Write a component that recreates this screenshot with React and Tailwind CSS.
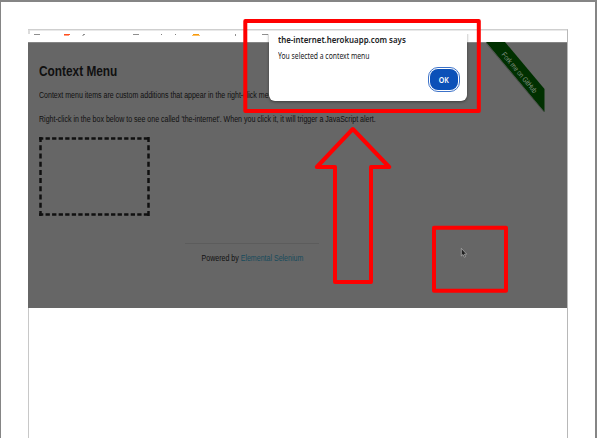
function TabStrip() {
  return (
    <svg className="block h-[12px] w-[539px] shrink-0" viewBox="28 30 539 12" shapeRendering="crispEdges">
      <rect x="28" y="30" width="539" height="1" fill="#e9e9e9" />
      <rect x="28" y="30" width="2" height="4" fill="#dcdcdc" />
      <rect x="34" y="34" width="6" height="1" fill="#8f8f8f" />
      <rect x="64" y="34" width="6" height="1" fill="#ff5020" />
      <rect x="64" y="35" width="5" height="1" fill="#ff9c80" />
      <rect x="83" y="34" width="2" height="1" fill="#909090" />
      <rect x="82" y="35" width="2" height="1" fill="#c0c0c0" />
      <rect x="133" y="34" width="6" height="1" fill="#8f8f8f" />
      <rect x="161" y="34" width="1" height="1" fill="#808080" />
      <rect x="175" y="34" width="1" height="1" fill="#808080" />
      <rect x="193" y="34" width="6" height="1" fill="#f59a10" />
      <rect x="192" y="35" width="8" height="1" fill="#ffc060" />
      <rect x="235" y="34" width="1" height="2" fill="#909090" />
      <rect x="262" y="34" width="6" height="1" fill="#8f8f8f" />
    </svg>
  );
}

function Dialog() {
  return (
    <div className="absolute left-[269px] top-[31px] flex h-[70px] w-[198px] flex-col rounded-b-[6px] bg-white pl-[9px] pt-[3px] font-['Noto_Sans',sans-serif] text-[#202124] shadow-[0_1px_3px_rgba(0,0,0,0.4)] [clip-path:inset(3px_-6px_-6px_-6px)]">
      <div className="h-[11px] origin-left scale-x-[0.925] whitespace-nowrap text-[8.5px] font-semibold leading-[11px]">the-internet.herokuapp.com says</div>
      <div className="mt-[5px] h-[11px] origin-left scale-x-[0.8] whitespace-nowrap text-[8.5px] leading-[11px]">You selected a context menu</div>
      <div className="ml-[150px] mt-[6px] flex h-[25px] w-[32px] items-center justify-center rounded-[10px] border border-[#3c72c9] bg-white p-px">
        <div className="flex h-full w-full items-center justify-center rounded-[8px] bg-[#0b50b8] text-[8px] font-semibold text-white">
          <span className="scale-x-[0.88]">OK</span>
        </div>
      </div>
    </div>
  );
}

function Page() {
  return (
    <main className="h-[266px] w-[539px] shrink-0 border-t border-[#858585] bg-[#666] pl-[11px] pt-[18px] text-[#101010]">
      <h1 className="h-[20px] origin-left scale-x-[0.846] whitespace-nowrap text-[14px] font-bold leading-[20px]">Context Menu</h1>
      <p className="mt-[9px] h-[10px] origin-left scale-x-[0.828] whitespace-nowrap text-[8.5px] leading-[10px]">Context menu items are custom additions that appear in the right-click menu.</p>
      <p className="mt-[14px] h-[10px] origin-left scale-x-[0.828] whitespace-nowrap text-[8.5px] leading-[10px]">Right-click in the box below to see one called 'the-internet'. When you click it, it will trigger a JavaScript alert.</p>
      <svg className="mt-[13px] block h-[79px] w-[111px]" viewBox="0 0 111 79" fill="none" stroke="#101010" strokeWidth="2.5">
        <path d="M0 1.5H111M0 77.5H111" strokeDasharray="4.3 2.25" />
        <path d="M1.5 0V79M109.5 0V79" strokeDasharray="5 3.22" />
      </svg>
      <footer className="ml-[146px] mt-[27px] flex h-[30px] w-[134px] flex-col items-center border-t border-[#5c5c5c] pt-[9px] text-[8.5px] leading-[10px]">
        <p className="scale-x-[0.828] whitespace-nowrap">Powered by <a className="text-[#164b5c]">Elemental Selenium</a></p>
      </footer>
    </main>
  );
}

export default function App() {
  return (
    <div className="relative h-[438px] w-[597px] overflow-hidden border-l border-r-2 border-t-[2px] border-[#858585] bg-white pl-[27px] pt-[27px] font-['Liberation_Sans',sans-serif]">
      <div className="flex h-[409px] w-[540px] flex-col border-r border-t border-r-[#b8b8b8] border-t-[#cfcfcf]">
        <TabStrip />
        <Page />
        <div className="flex-1 border-l border-[#c8c8c8]" />
      </div>
      <div className="absolute -left-px -top-[2px] h-[438px] w-[597px]">
        <svg className="absolute inset-0 h-full w-full" viewBox="0 0 597 438">
          <path d="M486 42H505L544.5 89V112Z" fill="#003000" />
          <path d="M486 43L544 112" stroke="#404840" strokeWidth=".7" />
        </svg>
        <span className="absolute left-[454px] top-[68px] w-[130px] rotate-[50deg] scale-x-[0.8] whitespace-nowrap text-center text-[7.5px] leading-[10px] text-[#839183]">Fork me on GitHub</span>
        <Dialog />
        <svg className="absolute inset-0 h-full w-full" viewBox="0 0 597 438" fill="none" stroke="#f00" strokeWidth="4" strokeLinejoin="round">
          <rect x="245.3" y="21" width="233.5" height="90" />
          <path d="M352.8 129L389.2 167H371V282H335V167H316.8Z" />
          <rect x="434" y="227.8" width="72" height="63" />
          <path d="M461.3 248.3V256L463 254.5L464.5 257.3L465.5 256.7L464.4 254.2H466.7Z" fill="#222" stroke="#b5b5b5" strokeWidth=".7" />
        </svg>
      </div>
    </div>
  );
}
